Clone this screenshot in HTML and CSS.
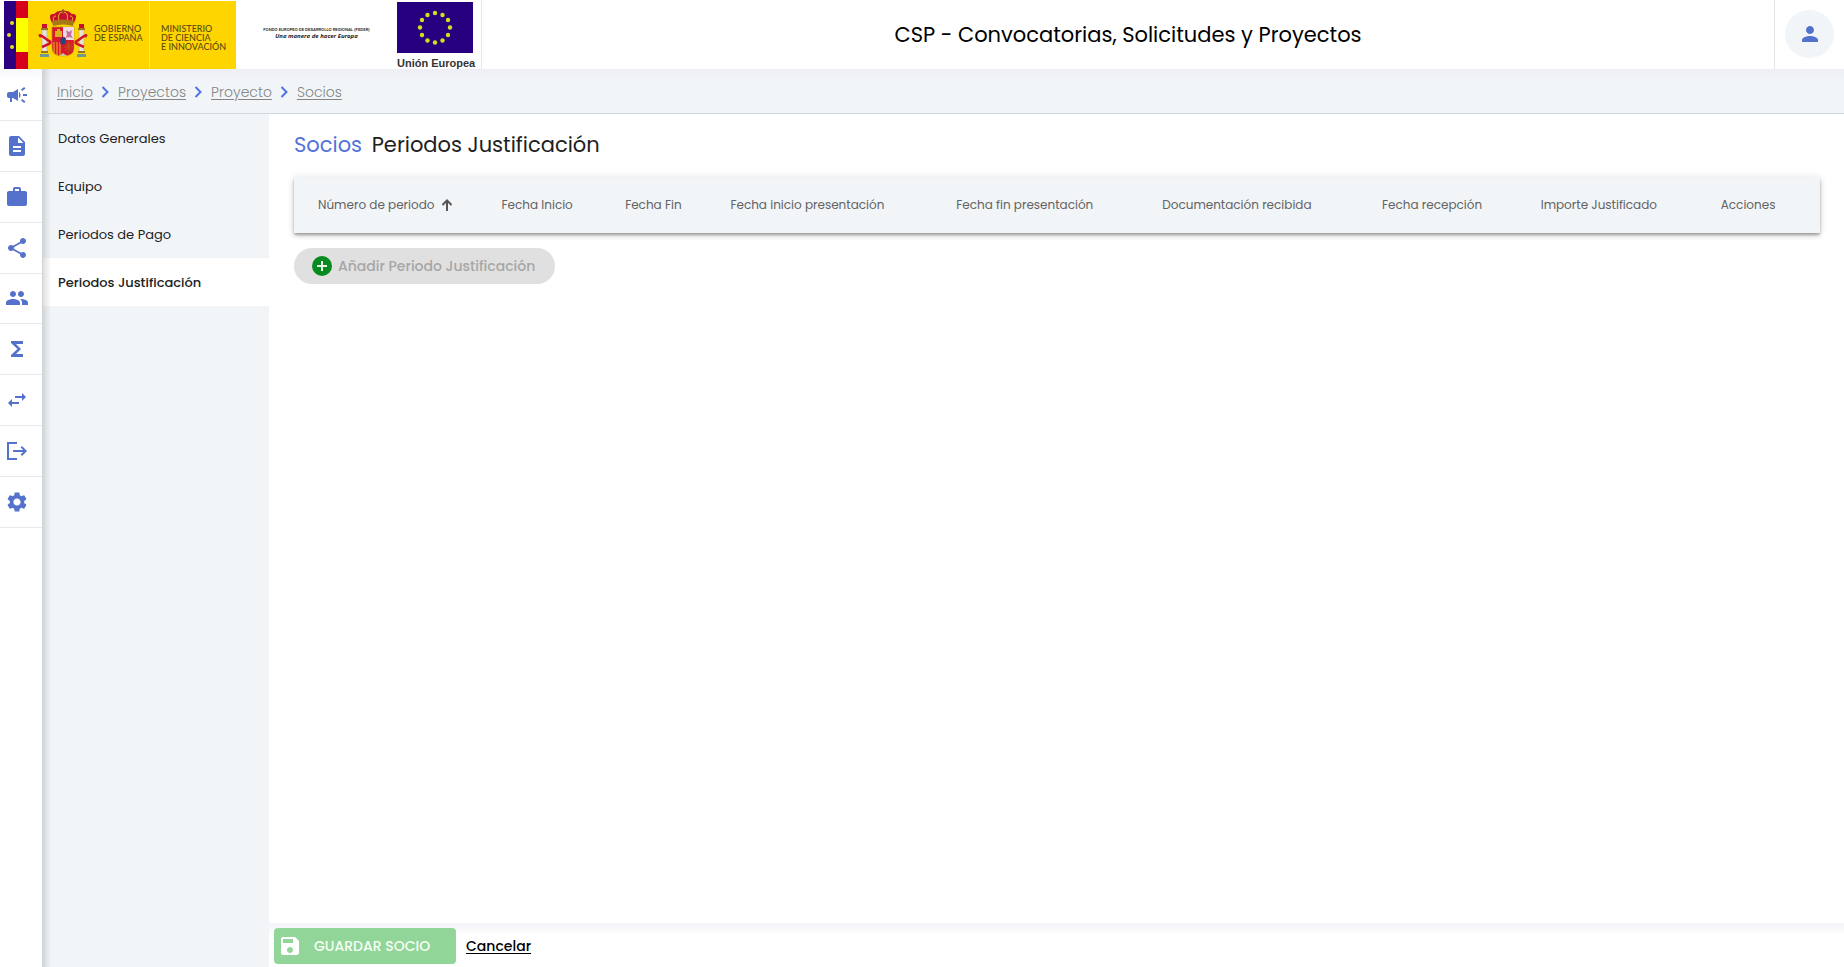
FILE: index.html
```html
<!DOCTYPE html>
<html lang="es">
<head>
<meta charset="utf-8">
<title>CSP - Convocatorias, Solicitudes y Proyectos</title>
<link rel="stylesheet" href="styles.css">
</head>
<body>
<header class="header">
  <div class="logos">
    <svg class="logo-gob" viewBox="0 0 232 68" role="img" aria-label="Gobierno de España, Ministerio de Ciencia e Innovación">
      <rect width="232" height="68" fill="#ffd500"/>
      <rect width="12" height="68" fill="#2b0080"/>
      <rect x="12" width="12" height="68" fill="#d6001c"/>
      <rect x="12" y="17" width="12" height="34" fill="#fcff00"/>
      <g fill="#e0e020"><circle cx="8" cy="22" r="2"/><circle cx="5" cy="34" r="2"/><circle cx="8" cy="46" r="2"/></g>
      <path d="M145.500 0V68" stroke="#ffe45c" stroke-width="1"/>
      <g>
        <path d="M48 22Q43 12 50 13Q54 9 59 10Q64 9 68 13Q75 12 70 22Z" fill="#c8102e"/>
        <path d="M50 20Q48 15 52 15M55 20Q53 12 58 11M63 20Q65 12 60 11M68 20Q70 15 66 15" fill="none" stroke="#e8b52a" stroke-width="1"/>
        <path d="M59 8v5M57.500 9.500h3" stroke="#8a6a20" stroke-width="1.200"/>
        <path d="M48 20Q59 17 70 20L69 25Q59 22 49 25Z" fill="#a87718"/>
        <path d="M48 26H70V47Q70 55 59 55Q48 55 48 47Z" fill="#db1730" stroke="#b99016" stroke-width=".7"/>
        <path d="M59 26H70V39H59Z" fill="#efdce6"/>
        <path d="M62 29l3 2 3-2-1 5 2 3-4-1-3 1 1-4z" fill="#c66b9e"/>
        <path d="M51 36v-6h2v-2h3v2h2v6z" fill="#d8b419"/>
        <path d="M50 41v12M53 41v13M56 41v13" stroke="#e9ba18" stroke-width="1"/>
        <path d="M61 42l7 8m0-8l-7 8m3.500-9v11M60 46h9" stroke="#b85b15" stroke-width=".8"/>
        <ellipse cx="59" cy="40" rx="3" ry="4" fill="#194c84" stroke="#bd1830"/>
        <path d="M55 55l4-3 4 3z" fill="#cfc78b"/>
        <g id="pillar">
          <path d="M38 29h5v22h-5z" fill="#e7e4d1" stroke="#aaa58b" stroke-width=".5"/>
          <path d="M38 23h5v4h-5z" fill="#c8102e"/>
          <path d="M37 27h7v2h-7zM37 50h7v2h-7z" fill="#9e741b"/>
          <path d="M36 53h9v3h-9z" fill="#6b9b91"/>
          <path d="M37 36Q34 33 38 35L45 40Q48 41 45 43L38 46" fill="none" stroke="#d1142e" stroke-width="2.500"/>
        </g>
        <use href="#pillar" transform="translate(118 0) scale(-1 1)"/>
      </g>
      <g class="gob-text" fill="#5c4a10">
        <text x="90" y="31">GOBIERNO</text><text x="90" y="40">DE ESPAÑA</text>
        <text x="157" y="31">MINISTERIO</text><text x="157" y="40">DE CIENCIA</text><text x="157" y="49">E INNOVACIÓN</text>
      </g>
    </svg>
    <div class="feder"><span class="feder-fund">FONDO EUROPEO DE DESARROLLO REGIONAL (FEDER)</span><strong>Una manera de hacer Europa</strong></div>
    <div class="eu">
      <svg class="eu-flag" viewBox="0 0 76 51" aria-hidden="true">
        <rect width="76" height="51" fill="#27007f"/>
        <g fill="#cfe01c">
          <circle cx="38" cy="11" r="2.200"/><circle cx="45.500" cy="13" r="2.200"/><circle cx="51" cy="18" r="2.200"/><circle cx="53" cy="25.500" r="2.200"/><circle cx="51" cy="33" r="2.200"/><circle cx="45.500" cy="38.500" r="2.200"/><circle cx="38" cy="40.500" r="2.200"/><circle cx="30.500" cy="38.500" r="2.200"/><circle cx="25" cy="33" r="2.200"/><circle cx="23" cy="25.500" r="2.200"/><circle cx="25" cy="18" r="2.200"/><circle cx="30.500" cy="13" r="2.200"/>
        </g>
      </svg>
      <span>Unión Europea</span>
    </div>
  </div>
  <h1 class="app-title">CSP - Convocatorias, Solicitudes y Proyectos</h1>
  <div class="account">
    <button class="avatar" aria-label="Usuario"><svg class="icon-user" viewBox="0 0 24 24"><path d="M12 12c2.210 0 4-1.790 4-4s-1.790-4-4-4-4 1.790-4 4 1.790 4 4 4zm0 2c-2.670 0-8 1.340-8 4v2h16v-2c0-2.660-5.330-4-8-4z"/></svg></button>
  </div>
</header>
<div class="shell">
  <nav class="rail" aria-label="Módulos">
    <a href="#" aria-label="Convocatorias"><svg viewBox="0 0 24 24"><path d="M18 11v2h4v-2h-4zm-2 6.610c.96.710 2.210 1.650 3.200 2.390.4-.53.8-1.070 1.200-1.600-.99-.74-2.240-1.680-3.200-2.400-.4.540-.8 1.080-1.200 1.610zM20.400 5.600c-.4-.53-.8-1.070-1.200-1.600-.99.740-2.240 1.680-3.200 2.400.4.530.8 1.070 1.200 1.600.96-.72 2.210-1.650 3.200-2.400zM4 9c-1.100 0-2 .9-2 2v2c0 1.100.9 2 2 2h1v4h2v-4h1l5 3V6L8 9H4zm11.500 3c0-1.330-.58-2.530-1.500-3.350v6.690c.92-.81 1.500-2.010 1.500-3.340z"/></svg></a>
    <a href="#" aria-label="Solicitudes"><svg viewBox="0 0 24 24"><path d="M14 2H6c-1.100 0-1.990.9-1.990 2L4 20c0 1.100.89 2 1.990 2H18c1.100 0 2-.9 2-2V8l-6-6zm2 16H8v-2h8v2zm0-4H8v-2h8v2zm-3-5V3.500L18.500 9H13z"/></svg></a>
    <a href="#" aria-label="Proyectos"><svg viewBox="0 0 24 24"><path d="M20 6h-4V4c0-1.110-.89-2-2-2h-4c-1.110 0-2 .89-2 2v2H4c-1.110 0-1.990.89-1.990 2L2 19c0 1.110.89 2 2 2h16c1.110 0 2-.89 2-2V8c0-1.110-.89-2-2-2zm-6 0h-4V4h4v2z"/></svg></a>
    <a href="#" aria-label="Compartir"><svg viewBox="0 0 24 24"><path d="M18 16.080c-.76 0-1.440.3-1.960.77L8.910 12.700c.05-.23.090-.46.090-.7s-.04-.47-.09-.7l7.050-4.110c.54.5 1.250.81 2.040.81 1.660 0 3-1.340 3-3s-1.340-3-3-3-3 1.340-3 3c0 .24.040.47.090.7L8.040 9.810C7.500 9.310 6.790 9 6 9c-1.660 0-3 1.340-3 3s1.340 3 3 3c.79 0 1.500-.31 2.040-.81l7.120 4.160c-.05.210-.08.430-.08.650 0 1.610 1.310 2.920 2.920 2.920s2.920-1.310 2.920-2.920-1.310-2.920-2.920-2.920z"/></svg></a>
    <a href="#" aria-label="Grupos"><svg viewBox="0 0 24 24"><path d="M16 11c1.660 0 2.990-1.340 2.990-3S17.660 5 16 5s-3 1.340-3 3 1.340 3 3 3zm-8 0c1.660 0 2.990-1.340 2.990-3S9.660 5 8 5 5 6.340 5 8s1.340 3 3 3zm0 2c-2.330 0-7 1.170-7 3.500V19h14v-2.500c0-2.330-4.670-3.500-7-3.500zm8 0c-.29 0-.62.020-.97.050 1.160.84 1.970 1.970 1.970 3.450V19h6v-2.500c0-2.330-4.670-3.500-7-3.500z"/></svg></a>
    <a href="#" aria-label="Ejecución económica"><svg viewBox="0 0 24 24"><path d="M18 4H6v2l6.500 6L6 18v2h12v-3h-7l5-5-5-5h7z"/></svg></a>
    <a href="#" aria-label="Movimientos"><svg viewBox="0 0 24 24"><path d="M6.990 11L3 15l3.990 4v-3H14v-2H6.990v-3zM21 9l-3.990-4v3H10v2h7.010v3L21 9z"/></svg></a>
    <a href="#" aria-label="Salidas"><svg viewBox="0 0 24 24"><path d="M2 3h10v2H4v14h8v2H2zM17 7l5 5-5 5-1.400-1.400L18.200 13H8v-2h10.200l-2.600-2.600z"/></svg></a>
    <a href="#" aria-label="Configuración"><svg viewBox="0 0 24 24"><path d="M19.140 12.940c.04-.3.060-.61.060-.94 0-.32-.02-.64-.07-.94l2.030-1.580c.18-.14.230-.41.120-.61l-1.920-3.320c-.12-.22-.37-.29-.59-.22l-2.390.96c-.5-.38-1.030-.7-1.620-.94l-.36-2.540c-.04-.24-.24-.41-.48-.41h-3.840c-.24 0-.43.170-.47.410l-.36 2.540c-.59.240-1.130.57-1.620.94l-2.390-.96c-.22-.08-.47 0-.59.220L2.740 8.870c-.12.210-.08.470.12.610l2.030 1.580c-.05.300-.09.630-.09.940s.02.640.07.940l-2.030 1.580c-.18.140-.23.410-.12.610l1.920 3.320c.12.220.37.290.59.220l2.390-.96c.5.380 1.030.7 1.620.94l.36 2.540c.05.240.24.410.48.410h3.840c.24 0 .44-.17.470-.41l.36-2.540c.59-.24 1.130-.56 1.620-.94l2.390.96c.22.080.47 0 .59-.22l1.920-3.320c.12-.22.070-.47-.12-.61l-2.010-1.580zM12 15.600c-1.980 0-3.600-1.620-3.600-3.600s1.620-3.600 3.600-3.600 3.600 1.620 3.600 3.600-1.620 3.600-3.600 3.600z"/></svg></a>
  </nav>
  <div class="page">
    <nav class="crumbs" aria-label="Ruta">
      <a href="#">Inicio</a>
      <svg viewBox="0 0 8 12"><path d="M1 1l5 5-5 5"/></svg>
      <a href="#">Proyectos</a>
      <svg viewBox="0 0 8 12"><path d="M1 1l5 5-5 5"/></svg>
      <a href="#">Proyecto</a>
      <svg viewBox="0 0 8 12"><path d="M1 1l5 5-5 5"/></svg>
      <a href="#">Socios</a>
    </nav>
    <div class="workspace">
      <nav class="menu" aria-label="Secciones">
        <a href="#">Datos Generales</a>
        <a href="#">Equipo</a>
        <a href="#">Periodos de Pago</a>
        <a href="#" class="active" aria-current="page">Periodos Justificación</a>
      </nav>
      <div class="content">
        <main class="main">
          <h2 class="heading"><span>Socios</span> Periodos Justificación</h2>
          <table class="periods">
            <colgroup><col class="c-num"><col class="c-start"><col class="c-end"><col class="c-pstart"><col class="c-pend"><col class="c-doc"><col class="c-rec"><col class="c-amount"><col class="c-actions"></colgroup>
            <thead><tr>
              <th scope="col"><button class="sort">Número de periodo <svg viewBox="0 0 12 12"><path d="M6 12V2M1.500 6L6 1.500 10.500 6"/></svg></button></th>
              <th scope="col">Fecha Inicio</th><th scope="col">Fecha Fin</th><th scope="col">Fecha inicio presentación</th><th scope="col">Fecha fin presentación</th><th scope="col">Documentación recibida</th><th scope="col">Fecha recepción</th><th scope="col">Importe Justificado</th><th scope="col">Acciones</th>
            </tr></thead>
          </table>
          <button class="add" disabled><svg viewBox="0 0 20 20"><circle cx="10" cy="10" r="10" fill="#078a1e"/><path d="M10 5v10M5 10h10" stroke="#e8f3e9" stroke-width="2"/></svg>Añadir Periodo Justificación</button>
        </main>
        <footer class="actions">
          <button class="save" disabled><svg viewBox="0 0 24 24"><path d="M17 3H5c-1.110 0-2 .9-2 2v14c0 1.100.89 2 2 2h14c1.100 0 2-.9 2-2V7l-4-4zm-5 16c-1.660 0-3-1.340-3-3s1.340-3 3-3 3 1.340 3 3-1.340 3-3 3zm3-10H5V5h10v4z"/></svg>GUARDAR SOCIO</button>
          <a href="#" class="cancel">Cancelar</a>
        </footer>
      </div>
    </div>
  </div>
</div>
</body>
</html>
```
FILE: styles.css
```css
* { box-sizing: border-box; }
body {
  margin: 0;
  min-height: 100vh;
  display: flex;
  flex-direction: column;
  background: #fff;
  color: #212121;
  font-family: Poppins, Inter, "Open Sans", sans-serif;
  font-size: 14px;
}
button { font-family: inherit; border: 0; }

.header { display: flex; height: 69px; background: #fff; }
.logos { display: flex; width: 482px; padding-left: 4px; border-right: 1px solid #e8e8ec; }
.logo-gob { width: 232px; height: 68px; margin-top: 1px; }
.gob-text { font: 500 9px Lato, sans-serif; }
.feder { width: 161px; padding-top: 26px; text-align: center; font-family: "Open Sans", sans-serif; color: #222; line-height: 7px; }
.feder span, .feder strong { display: block; white-space: nowrap; }
.feder-fund { font-family: Inter, sans-serif; font-size: 4px; font-weight: 600; }
.feder strong { font-size: 6px; font-style: italic; }
.eu { width: 76px; margin-top: 2px; font: 700 11px/20px "Liberation Sans", sans-serif; color: #333; text-align: center; white-space: nowrap; }
.eu-flag { display: block; width: 76px; height: 51px; }
.app-title { flex: 1; margin: 0; font-size: 21px; font-weight: 400; line-height: 70px; text-align: center; color: #000; }
.account { display: flex; width: 70px; padding: 10px 10px 0; border-left: 1px solid #e4e4e8; }
.avatar { display: flex; align-items: center; justify-content: center; width: 50px; height: 48px; padding: 0; border-radius: 50%; background: #f1f5f8; }
.icon-user { width: 24px; height: 24px; fill: #5472cc; }

.shell { flex: 1; display: flex; }
.rail {
  display: grid;
  grid-template-rows: repeat(9, 1fr);
  align-self: flex-start;
  width: 42px;
  height: 459px;
  padding-top: 1px;
  background: linear-gradient(#f6f7fa, #fff 12px);
}
.rail a { display: flex; align-items: center; padding-left: 5px; border-bottom: 1px solid #e8e8ef; }
.rail svg { width: 24px; height: 24px; fill: #5472cc; }
.page {
  flex: 1;
  display: flex;
  flex-direction: column;
  min-width: 0;
  border-left: 1px solid #d2d3d5;
}
.crumbs {
  display: flex;
  align-items: center;
  height: 45px;
  padding: 2px 0 0 14px;
  gap: 8px;
  border-bottom: 1px solid #d2d7db;
  background: linear-gradient(90deg, #00000020, #0000 8px), linear-gradient(#edeff4, #f1f5f8 14px);
}
.crumbs a { color: #858585; font-weight: 300; text-underline-offset: 2px; }
.crumbs svg { width: 9px; height: 12px; fill: none; stroke: #5472dc; stroke-width: 2; }
.workspace { flex: 1; display: flex; }
.menu { width: 226px; background: linear-gradient(90deg, #00000020, #0000 8px), #f1f5f8; }
.menu a { display: block; height: 48px; padding-left: 15px; color: #212121; font-size: 13px; line-height: 50px; text-decoration: none; }
.menu .active { background: linear-gradient(90deg, #00000020, #0000 8px), #fff; font-weight: 500; }
.content { flex: 1; display: flex; flex-direction: column; min-width: 0; }
.main { flex: 1; padding: 16px 24px 0 25px; }
.heading { margin: 0 0 17px; font-size: 21px; line-height: 30px; font-weight: 400; }
.heading span { margin-right: 4px; color: #5472dc; }
.periods {
  width: 100%;
  height: 56px;
  table-layout: fixed;
  border-collapse: collapse;
  background: #f1f5f8;
  box-shadow: 0 3px 5px -1px #0003, 0 2px 2px #0003, 0 1px 8px #0002;
}
.periods th { padding: 0; font-size: 12px; font-weight: 400; color: #636363; text-align: left; white-space: nowrap; }
.periods th:first-child { padding-left: 24px; }
.c-num { width: 13.6%; }
.c-start { width: 8.1%; }
.c-end { width: 6.9%; }
.c-pstart { width: 14.8%; }
.c-pend { width: 13.5%; }
.c-doc { width: 14.4%; }
.c-rec { width: 10.4%; }
.c-amount { width: 11.8%; }
.c-actions { width: 6.5%; }
.sort { display: flex; align-items: center; gap: 6px; padding: 0; background: none; color: inherit; font-size: 12px; }
.sort svg { width: 12px; height: 12px; fill: none; stroke: #555; stroke-width: 2; }
.add { display: flex; align-items: center; gap: 6px; height: 36px; margin-top: 15px; padding: 0 20px 0 18px; border-radius: 18px; background: #e0e0e0; color: #a6a6a6; font-size: 14px; font-weight: 500; }
.add svg { width: 20px; height: 20px; }
.actions { display: flex; align-items: center; gap: 10px; height: 44px; padding: 2px 5px 0; background: linear-gradient(#f3f3f8, #fff 12px); }
.save { display: flex; align-items: center; gap: 12px; width: 182px; height: 36px; padding: 0 4px; border-radius: 4px; background: #92d598; color: #f6fff6; font-size: 14px; font-weight: 500; }
.save svg { width: 24px; height: 24px; fill: #fff; }
.cancel { color: #000; font-size: 14px; font-weight: 500; text-underline-offset: 2px; }
```
